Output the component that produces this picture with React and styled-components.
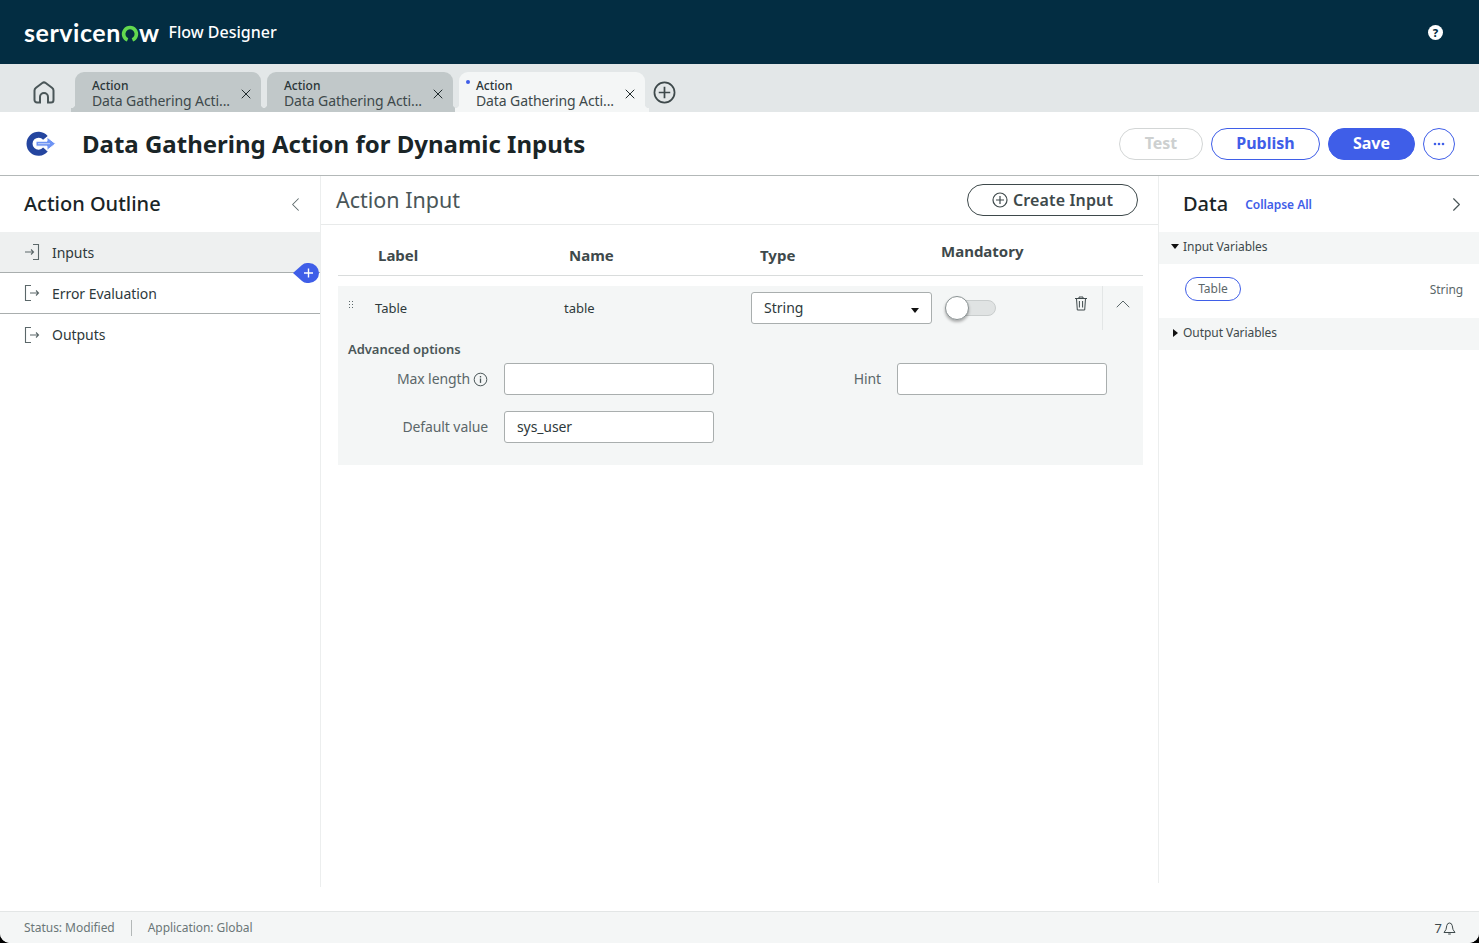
import styled, { createGlobalStyle } from 'styled-components'
import { ChevronLeft, ChevronRight, ChevronUp, X } from 'lucide-react'

const tabs = [
    { id: 1, active: false },
    { id: 2, active: false },
    { id: 3, active: true },
]

const PlusCircle = ({ size = 16, weight = 1.5 }) => (
    <svg width={size} height={size} viewBox='0 0 16 16' fill='none' stroke='currentColor' strokeWidth={weight}>
        <circle cx='8' cy='8' r='7' />
        <path d='M8 4v8M4 8h8' />
    </svg>
)

const ExitIcon = () => (
    <svg width='16' height='18' viewBox='0 0 16 18' fill='none' stroke='#5b6769' strokeWidth='1.1'>
        <path d='M7 1.5H1.5v15H7' />
        <path d='M6 9h8.5M12 6.5 14.5 9 12 11.5' />
    </svg>
)

const EnterIcon = () => (
    <svg width='16' height='18' viewBox='0 0 16 18' fill='none' stroke='#5b6769' strokeWidth='1.1'>
        <path d='M9 1.5h5.5v15H9' />
        <path d='M1 9h8.5M7 6.5 9.5 9 7 11.5' />
    </svg>
)

const App = () => {
    return (
        <Page>
            <GlobalStyle />
            <TopBar>
                <Logo>
                    servicen
                    <LogoO width='18' height='17' viewBox='0 0 18 17' fill='none'>
                        <path d='M6.6 14.9a6.4 6.4 0 1 1 4.8 0' stroke='#62d84e' strokeWidth='3.6' />
                    </LogoO>
                    w
                </Logo>
                <Product>Flow Designer</Product>
                <HelpDot>?</HelpDot>
            </TopBar>

            <TabBar>
                <HomeButton>
                    <svg width='22' height='23' viewBox='0 0 22 23' fill='none' stroke='#4a5658' strokeWidth='2'>
                        <path d='M7 21.5H4A2.5 2.5 0 0 1 1.5 19V9.5Q1.5 8 3 6.8L9.3 2a2.8 2.8 0 0 1 3.4 0L19 6.8q1.5 1.2 1.5 2.7V19a2.5 2.5 0 0 1-2.5 2.5h-3V16a4 4 0 0 0-8 0Z' />
                    </svg>
                </HomeButton>
                {tabs.map(({ id, active }) => (
                    <Tab key={id} $active={active}>
                        {active && <TabDot />}
                        <TabText>
                            <TabKind>Action</TabKind>
                            <TabName>Data Gathering Acti...</TabName>
                        </TabText>
                        <TabClose size={16} strokeWidth={1.5} />
                    </Tab>
                ))}
                <AddTab>
                    <PlusCircle size={23} weight={1.2} />
                </AddTab>
            </TabBar>

            <TitleBar>
                <ActionIcon width='30' height='28' viewBox='0 0 30 28'>
                    <path d='M21.7 6A12 12 0 1 0 21.7 21.4L17.1 17.6A6 6 0 1 1 17.1 9.8Z' fill='#24459f' />
                    <path d='M10 11.2h11V7l8.5 6.7-8.5 6.7v-4.2H10Z' fill='#6d93f4' stroke='#fff' strokeWidth='1' />
                    <path d='M12 13.7h12' stroke='#c3d3fa' strokeWidth='1' />
                </ActionIcon>
                <Title>Data Gathering Action for Dynamic Inputs</Title>
                <Actions>
                    <PillButton $width={84} $kind='disabled'>Test</PillButton>
                    <PillButton $width={109} $kind='outline'>Publish</PillButton>
                    <PillButton $width={87} $kind='solid'>Save</PillButton>
                    <MoreButton>
                        <svg width='12' height='4' viewBox='0 0 12 4' fill='#3f5ee8'>
                            <circle cx='2' cy='2' r='1.3' />
                            <circle cx='6' cy='2' r='1.3' />
                            <circle cx='10' cy='2' r='1.3' />
                        </svg>
                    </MoreButton>
                </Actions>
            </TitleBar>

            <Body>
                <Outline>
                    <OutlineHead>
                        <PanelTitle>Action Outline</PanelTitle>
                        <ChevronLeft size={23} strokeWidth={1.1} color='#5b6769' />
                    </OutlineHead>
                    <OutlineItem $selected>
                        <EnterIcon />
                        Inputs
                        <AddBadge>
                            <svg width='26' height='20' viewBox='0 0 26 20'>
                                <path d='M0 10 9 2Q11 0 14 0h2a10 10 0 0 1 0 20h-2q-3 0-5-2Z' fill='#3f5ee8' />
                                <path d='M15.5 5.5v9M11 10h9' stroke='#fff' strokeWidth='1.4' />
                            </svg>
                        </AddBadge>
                    </OutlineItem>
                    <OutlineItem>
                        <ExitIcon />
                        Error Evaluation
                    </OutlineItem>
                    <OutlineItem $plain>
                        <ExitIcon />
                        Outputs
                    </OutlineItem>
                </Outline>

                <Content>
                    <ContentHead>
                        <ContentTitle>Action Input</ContentTitle>
                        <CreateButton>
                            <PlusCircle size={16} weight={1.2} />
                            Create Input
                        </CreateButton>
                    </ContentHead>
                    <Columns>
                        <ColumnHead>Label</ColumnHead>
                        <ColumnHead>Name</ColumnHead>
                        <ColumnHead>Type</ColumnHead>
                        <ColumnHead $raised>Mandatory</ColumnHead>
                    </Columns>
                    <Card>
                        <CardRow>
                            <Grip>
                                {Array.from({ length: 6 }, (_, i) => <i key={i} />)}
                            </Grip>
                            <Cell>Table</Cell>
                            <Cell>table</Cell>
                            <SelectBox>
                                String
                                <Caret />
                            </SelectBox>
                            <Toggle>
                                <ToggleKnob />
                            </Toggle>
                            <RowTools>
                                <svg width='14' height='15' viewBox='0 0 14 15' fill='none' stroke='#3e494b' strokeWidth='1'>
                                    <path d='M1 2.5h12M5 2.5V1h4v1.5M2.5 2.5l.8 11.5h7.4l.8-11.5M5.4 5v6.5M8.6 5v6.5' />
                                </svg>
                                <RowCollapse>
                                    <ChevronUp size={24} strokeWidth={1} color='#5b6769' />
                                </RowCollapse>
                            </RowTools>
                        </CardRow>
                        <Advanced>Advanced options</Advanced>
                        <FieldRow>
                            <FieldLabel>
                                Max length
                                <InfoIcon width='15' height='15' viewBox='0 0 15 15' fill='none' stroke='#4a5658'>
                                    <circle cx='7.5' cy='7.5' r='6.3' strokeWidth='1' />
                                    <path d='M7.5 6.5v4.4' strokeWidth='1.3' />
                                    <path d='M7.5 4v1.5' strokeWidth='1.3' />
                                </InfoIcon>
                            </FieldLabel>
                            <FieldInput readOnly value='' />
                            <HintLabel>Hint</HintLabel>
                            <FieldInput readOnly value='' />
                        </FieldRow>
                        <FieldRow>
                            <FieldLabel>Default value</FieldLabel>
                            <FieldInput readOnly value='sys_user' />
                        </FieldRow>
                    </Card>
                </Content>

                <DataPanel>
                    <DataHead>
                        <PanelTitle>Data</PanelTitle>
                        <CollapseAll>Collapse All</CollapseAll>
                        <ChevronRight size={23} strokeWidth={1.2} color='#4a5658' />
                    </DataHead>
                    <Group>
                        <TriangleDown />
                        Input Variables
                    </Group>
                    <VariableRow>
                        <VariablePill>Table</VariablePill>
                        <VariableType>String</VariableType>
                    </VariableRow>
                    <Group>
                        <TriangleRight />
                        Output Variables
                    </Group>
                </DataPanel>
            </Body>

            <StatusBar>
                <StatusText>Status: Modified</StatusText>
                <StatusDivider />
                <StatusText>Application: Global</StatusText>
                <Notifications>
                    7
                    <svg width='13' height='14' viewBox='0 0 13 14' fill='none' stroke='#3e494b' strokeWidth='1'>
                        <path d='M1 11.5h11L10 8.5 9.2 4.5a2.8 3.4 0 0 0-5.4 0L3 8.5ZM5.2 13h2.6' />
                    </svg>
                </Notifications>
            </StatusBar>
        </Page>
    )
}

const GlobalStyle = createGlobalStyle`
    html, body {
        margin: 0;
        height: 100%;
        background: #000;
    }
    body {
        font-family: "Noto Sans", "Open Sans", sans-serif;
        color: #1f2a2c;
    }
    * {
        box-sizing: border-box;
    }
`

const Page = styled.div`
    height: 100vh;
    display: flex;
    flex-direction: column;
    background: #fff;
    overflow: hidden;
    border-radius: 0 0 10px 10px;
`

const TopBar = styled.header`
    flex: 0 0 64px;
    display: flex;
    align-items: center;
    padding: 0 36px 0 24px;
    background: #032d42;
    color: #fff;
`

const Logo = styled.div`
    display: flex;
    align-items: center;
    font-family: "Lato", sans-serif;
    font-size: 25px;
    font-weight: 700;
    letter-spacing: 0.55px;
    line-height: 1;
`

const LogoO = styled.svg`
    margin: 3px 0 0 0;
`

const Product = styled.div`
    margin-left: 9px;
    font-size: 16px;
    font-weight: 500;
`

const HelpDot = styled.div`
    margin-left: auto;
    width: 15px;
    height: 15px;
    border-radius: 50%;
    background: #fff;
    color: #032d42;
    font-size: 11px;
    font-weight: 800;
    line-height: 15px;
    text-align: center;
`

const TabBar = styled.nav`
    flex: 0 0 48px;
    display: flex;
    align-items: flex-end;
    gap: 6px;
    padding-left: 33px;
    background: #e3e7e8;
`

const HomeButton = styled.div`
    width: 36px;
    height: 40px;
    display: flex;
    align-items: center;
    svg {
        margin-top: 1px;
    }
`

const Tab = styled.div`
    position: relative;
    width: 186px;
    height: 40px;
    display: flex;
    align-items: center;
    padding: 0 7px 0 17px;
    border-radius: 9px 9px 0 0;
    background: ${props => (props.$active ? '#f4f6f6' : '#c1c8c9')};
    &::before,
    &::after {
        content: '';
        position: absolute;
        bottom: 0;
        width: 4px;
        height: 8px;
    }
    &::before {
        left: -4px;
        background: radial-gradient(circle at 0 0, transparent 4px, ${props => (props.$active ? '#f4f6f6' : '#c1c8c9')} 4.5px);
    }
    &::after {
        right: -4px;
        background: radial-gradient(circle at 100% 0, transparent 4px, ${props => (props.$active ? '#f4f6f6' : '#c1c8c9')} 4.5px);
    }
`

const TabDot = styled.span`
    position: absolute;
    left: 7px;
    top: 8px;
    width: 4px;
    height: 4px;
    border-radius: 50%;
    background: #3f5ee8;
`

const TabText = styled.div`
    flex: 1;
    min-width: 0;
    padding-top: 3px;
`

const TabKind = styled.div`
    font-size: 12px;
    line-height: 15px;
    font-weight: 500;
    color: #2a3537;
`

const TabName = styled.div`
    font-size: 14px;
    line-height: 16px;
    letter-spacing: -0.1px;
    color: #3e494b;
    white-space: nowrap;
`

const TabClose = styled(X)`
    flex: none;
    color: #1f2a2c;
    margin-top: 4px;
`

const AddTab = styled.div`
    height: 40px;
    margin-left: 1.5px;
    display: flex;
    align-items: center;
    color: #3e494b;
`

const TitleBar = styled.div`
    flex: 0 0 64px;
    display: flex;
    align-items: center;
    padding: 1px 24px 0 26px;
    border-bottom: 1px solid #b3b8b8;
`

const ActionIcon = styled.svg`
    flex: none;
`

const Title = styled.h1`
    margin: 0 0 0 26px;
    padding-bottom: 2px;
    font-size: 24px;
    font-weight: 700;
    color: #1a2527;
`

const Actions = styled.div`
    margin-left: auto;
    display: flex;
    gap: 8px;
`

const pillColors = {
    disabled: 'border: 1px solid #d3d6d6; color: #cdd0d0; background: #fff;',
    outline: 'border: 1px solid #3f5ee8; color: #3f5ee8; background: #fff;',
    solid: 'border: 1px solid #3f5ee8; color: #fff; background: #3f5ee8;',
}

const PillButton = styled.div`
    width: ${props => props.$width}px;
    height: 32px;
    border-radius: 16px;
    font-size: 16px;
    font-weight: 700;
    line-height: 29px;
    text-align: center;
    ${props => pillColors[props.$kind]}
`

const MoreButton = styled.div`
    width: 32px;
    height: 32px;
    display: flex;
    align-items: center;
    justify-content: center;
    border-radius: 50%;
    border: 1px solid #3f5ee8;
`

const Body = styled.main`
    flex: 1;
    display: flex;
    min-height: 0;
    margin-bottom: 24px;
`

const Outline = styled.aside`
    flex: 0 0 321px;
    border-right: 1px solid #eceeee;
`

const OutlineHead = styled.div`
    height: 56px;
    display: flex;
    align-items: center;
    justify-content: space-between;
    padding: 0 13px 0 24px;
`

const PanelTitle = styled.h2`
    margin: 0;
    padding-bottom: 2px;
    font-size: 20px;
    font-weight: 500;
    color: #1a2527;
`

const OutlineItem = styled.div`
    position: relative;
    height: 41px;
    display: flex;
    align-items: center;
    gap: 12px;
    padding-left: 24px;
    font-size: 14px;
    letter-spacing: -0.05px;
    color: #2e393b;
    background: ${props => (props.$selected ? '#eef0f0' : 'transparent')};
    border-bottom: ${props => (props.$plain ? 'none' : '1px solid #a9aeae')};
`

const AddBadge = styled.div`
    position: absolute;
    right: 1px;
    bottom: -11px;
    height: 20px;
    z-index: 1;
`

const Content = styled.section`
    flex: 1;
    min-width: 0;
`

const ContentHead = styled.div`
    height: 49px;
    display: flex;
    align-items: center;
    justify-content: space-between;
    padding: 0 20px 1px 15px;
    border-bottom: 1px solid #e8eaea;
`

const ContentTitle = styled.h2`
    margin: 0;
    font-size: 21.5px;
    font-weight: 400;
    color: #4a5658;
`

const CreateButton = styled.div`
    width: 171px;
    height: 32px;
    display: flex;
    align-items: center;
    justify-content: center;
    gap: 5px;
    border: 1px solid #3e494b;
    border-radius: 16px;
    font-size: 16px;
    font-weight: 600;
    letter-spacing: 0.15px;
    color: #3e494b;
`

const Columns = styled.div`
    height: 51px;
    margin: 0 15px 0 17px;
    display: grid;
    grid-template-columns: 191px 191px 181px 1fr;
    padding-left: 40px;
    border-bottom: 1px solid #d9dcdc;
`

const ColumnHead = styled.div`
    padding-top: ${props => (props.$raised ? '16px' : '20px')};
    font-size: 15px;
    font-weight: 700;
    line-height: 21px;
    color: #3e494b;
`

const Card = styled.div`
    margin: 10px 15px 0 17px;
    height: 179px;
    background: #f4f6f6;
`

const CardRow = styled.div`
    height: 44px;
    display: grid;
    grid-template-columns: 37px 189px 187px 181px 13px 51px 1fr;
    align-items: center;
    font-size: 13px;
    color: #2e393b;
`

const Grip = styled.div`
    align-self: start;
    margin: 15px 0 0 11px;
    width: 6px;
    display: grid;
    grid-template-columns: 1px 1px;
    gap: 2px;
    i {
        width: 1px;
        height: 1px;
        background: #5b6769;
    }
`

const Cell = styled.div`
    padding-bottom: 1px;
`

const SelectBox = styled.div`
    position: relative;
    height: 32px;
    padding-left: 12px;
    font-size: 14px;
    line-height: 30px;
    background: #fff;
    border: 1px solid #a9aeae;
    border-radius: 3px;
`

const Caret = styled.span`
    position: absolute;
    right: 12px;
    top: 15px;
    border-top: 5px solid #111;
    border-left: 4px solid transparent;
    border-right: 4px solid transparent;
`

const Toggle = styled.div`
    grid-column: 6;
    position: relative;
    height: 16px;
    margin-left: 2px;
    border-radius: 8px;
    background: #e0e3e3;
    border: 1px solid #c9cdcd;
`

const ToggleKnob = styled.span`
    position: absolute;
    left: -3px;
    top: -5px;
    width: 24px;
    height: 24px;
    border-radius: 50%;
    background: #fff;
    border: 1px solid #8a9293;
    box-shadow: 0 2px 3px rgba(0, 0, 0, 0.3);
`

const RowTools = styled.div`
    grid-column: 7;
    align-self: stretch;
    display: flex;
    justify-content: flex-end;
    align-items: flex-start;
    gap: 14px;
    padding-top: 10px;
`

const RowCollapse = styled.div`
    width: 41px;
    height: 44px;
    margin-top: -10px;
    padding-top: 6px;
    display: flex;
    justify-content: center;
    align-items: flex-start;
    border-left: 1px solid #e3e6e6;
`

const Advanced = styled.div`
    padding: 9px 0 0 10px;
    font-size: 13px;
    font-weight: 600;
    line-height: 20px;
    letter-spacing: -0.05px;
    color: #4a5658;
`

const FieldRow = styled.div`
    display: grid;
    grid-template-columns: 150px 210px 151px 210px;
    column-gap: 16px;
    align-items: center;
    height: 32px;
    margin-top: 4px;
    & + & {
        margin-top: 16px;
    }
    font-size: 14px;
    letter-spacing: -0.1px;
    color: #5b6769;
`

const FieldLabel = styled.div`
    display: flex;
    justify-content: flex-end;
    align-items: center;
    gap: 3px;
    padding-bottom: 2px;
`

const HintLabel = styled.div`
    padding-bottom: 2px;
    text-align: right;
`

const InfoIcon = styled.svg`
    flex: none;
    margin-top: 2px;
`

const FieldInput = styled.input`
    width: 210px;
    height: 32px;
    padding: 0 12px 2px;
    font: inherit;
    letter-spacing: inherit;
    color: #2e393b;
    background: #fff;
    border: 1px solid #a9aeae;
    border-radius: 3px;
    outline: none;
`

const DataPanel = styled.aside`
    flex: 0 0 321px;
    margin-bottom: 4px;
    border-left: 1px solid #eceeee;
`

const DataHead = styled.div`
    height: 56px;
    display: flex;
    align-items: center;
    padding: 0 11px 0 24px;
    svg {
        margin-left: auto;
    }
`

const CollapseAll = styled.span`
    margin: 1px 0 0 17px;
    font-size: 12px;
    font-weight: 600;
    letter-spacing: -0.05px;
    color: #3f5ee8;
`

const Group = styled.div`
    height: 32px;
    display: flex;
    align-items: center;
    gap: 4px;
    padding: 0 0 3px 12px;
    font-size: 12px;
    letter-spacing: -0.05px;
    color: #3e494b;
    background: #f4f6f6;
`

const TriangleDown = styled.span`
    border-top: 5px solid #111;
    border-left: 4.5px solid transparent;
    border-right: 4.5px solid transparent;
`

const TriangleRight = styled.span`
    margin-left: 2px;
    margin-right: 1px;
    border-left: 5px solid #111;
    border-top: 4.5px solid transparent;
    border-bottom: 4.5px solid transparent;
`

const VariableRow = styled.div`
    height: 54px;
    display: flex;
    align-items: center;
    justify-content: space-between;
    padding: 0 16px 4px 26px;
`

const VariablePill = styled.div`
    width: 56px;
    height: 24px;
    border: 1px solid #3f5ee8;
    border-radius: 12px;
    font-size: 12px;
    line-height: 22px;
    text-align: center;
    color: #5b6769;
`

const VariableType = styled.span`
    font-size: 12px;
    letter-spacing: -0.1px;
    color: #5b6769;
`

const StatusBar = styled.footer`
    flex: 0 0 32px;
    display: flex;
    align-items: center;
    padding: 0 24px;
    background: #f4f6f6;
    border-top: 1px solid #e3e6e6;
`

const StatusText = styled.span`
    font-size: 12px;
    letter-spacing: -0.05px;
    color: #6b7678;
`

const StatusDivider = styled.span`
    width: 1px;
    height: 16px;
    margin: 0 16px;
    background: #b3b8b8;
`

const Notifications = styled.div`
    margin-left: auto;
    margin-right: -1px;
    display: flex;
    align-items: center;
    gap: 1px;
    font-size: 13px;
    color: #3e494b;
`

export default App
